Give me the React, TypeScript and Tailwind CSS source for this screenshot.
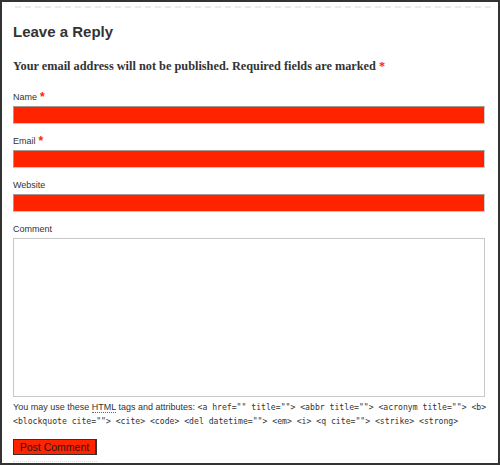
import React from 'react';

const sans = "font-['Liberation_Sans',Arial,sans-serif]";
const mono = "font-['DejaVu_Sans_Mono',monospace]";

function Field({ label, required }: { label: string; required?: boolean }) {
  return (
    <div className="flex flex-col">
      <label className={`${sans} text-[9px] leading-[12px] text-[#333] h-[15px] whitespace-nowrap`}>
        {label}
        {required && (
          <span className="text-[#ff2200] font-bold text-[12px] leading-[12px] ml-[3px] align-top">*</span>
        )}
      </label>
      <input
        type="text"
        className="h-[18px] w-[472px] bg-[#ff2300] border border-[#a49a92] border-b-[#ccc] border-r-[#ccc] outline-none"
      />
    </div>
  );
}

export default function App() {
  return (
    <div className="w-[500px] h-[465px] border-2 border-[#333] bg-white overflow-hidden">
      <div className="pl-[11px] pr-[4px] pt-[4px]">
        {/* dashed separator */}
        <div className="border-t-2 border-dashed border-[#ebebeb] ml-[2px] w-[476px]" />

        <h3 className={`${sans} font-bold text-[15px] leading-[18px] text-[#333] mt-[15px]`}>
          Leave a Reply
        </h3>

        <p className="font-['Liberation_Serif',serif] font-bold text-[#333] text-[12.3px] leading-[16px] mt-[17px] whitespace-nowrap">
          Your email address will not be published. Required fields are marked{' '}
          <span className="text-[#ff2200]">*</span>
        </p>

        <div className="flex flex-col gap-[11px] mt-[17px]">
          <Field label="Name" required />
          <Field label="Email" required />
          <Field label="Website" />
        </div>

        <div className="flex flex-col mt-[11px]">
          <label className={`${sans} text-[9px] leading-[12px] text-[#333] h-[15px]`}>Comment</label>
          <textarea className="h-[159px] w-[472px] border border-[#c8c8c8] bg-white resize-none outline-none" />
        </div>

        <div className={`${sans} text-[9px] leading-[14px] text-[#333] mt-[3px] whitespace-nowrap`}>
          <p>
            You may use these <span className="border-b border-dotted border-[#666]">HTML</span> tags and attributes:{' '}
            <code className={`${mono} text-[8.15px]`}>
              &lt;a href="" title=""&gt; &lt;abbr title=""&gt; &lt;acronym title=""&gt; &lt;b&gt;
            </code>
          </p>
          <p>
            <code className={`${mono} text-[8.15px]`}>
              &lt;blockquote cite=""&gt; &lt;cite&gt; &lt;code&gt; &lt;del datetime=""&gt; &lt;em&gt; &lt;i&gt; &lt;q cite=""&gt; &lt;strike&gt; &lt;strong&gt;
            </code>
          </p>
        </div>

        <div className="mt-[11px]">
          <button className={`${sans} w-[84px] h-[16px] bg-[#ff2300] border border-[#333] border-r-2 text-[#1a1a1a] text-[10.5px] leading-[14px] flex items-center justify-center`}>
            Post Comment
          </button>
          <div className="mt-[6px] w-[84px] border-t border-dotted border-[#ddd]" />
        </div>
      </div>
    </div>
  );
}
